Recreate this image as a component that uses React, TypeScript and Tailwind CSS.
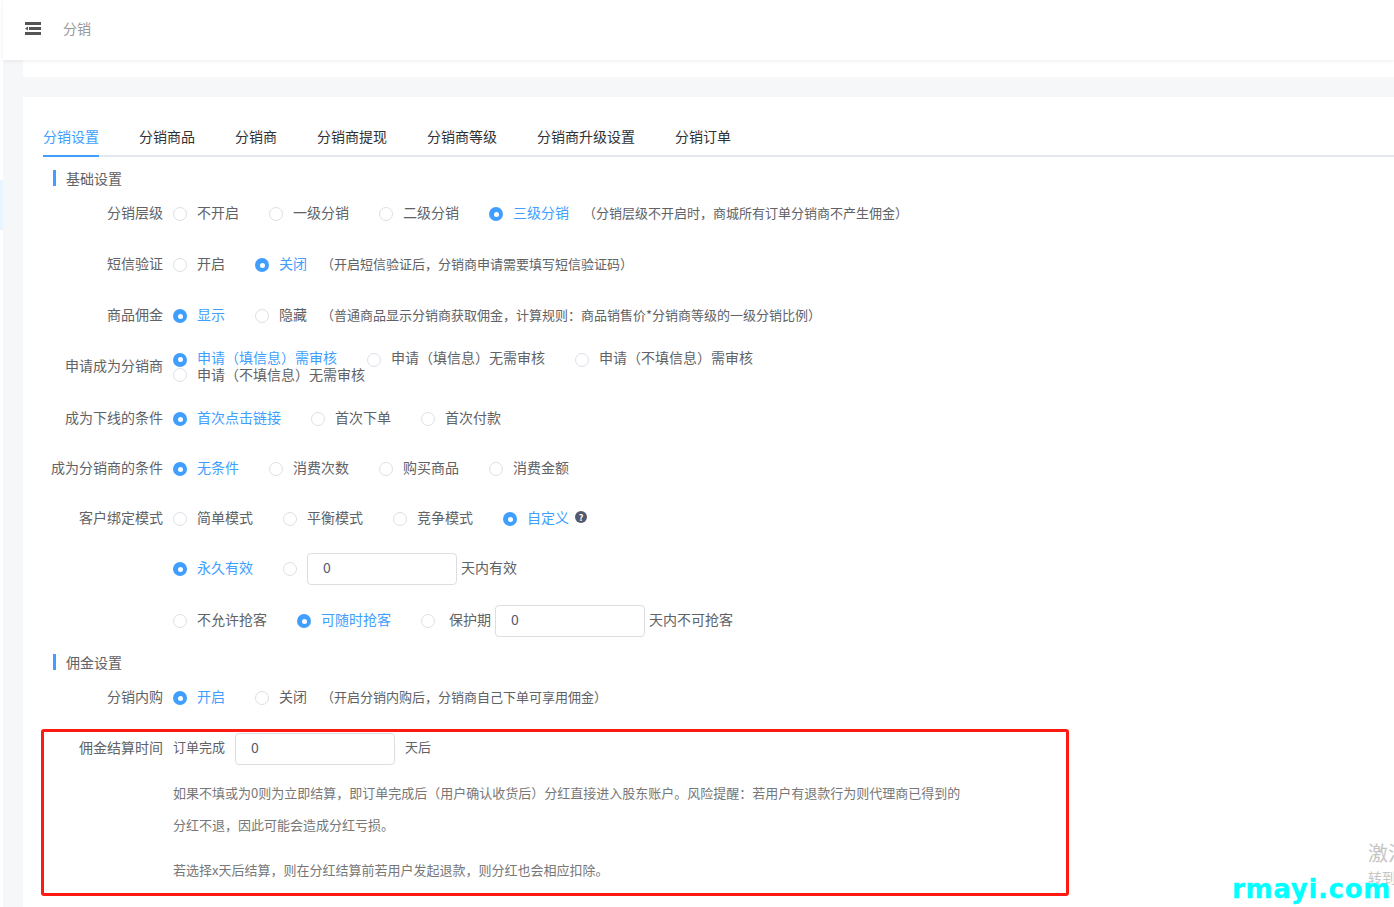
const font = "font-['Noto_Sans_CJK_SC','Noto_Sans',sans-serif]";

function Radio({ label, checked, className = '' }: { label?: string; checked?: boolean; className?: string }) {
    return (
        <span className={`flex items-center ${className}`}>
            {checked ? (
                <span className="mt-1 flex h-[14px] w-[14px] shrink-0 items-center justify-center rounded-full bg-[#409eff]">
                    <span className="h-[5px] w-[5px] rounded-full bg-white" />
                </span>
            ) : (
                <span className="mt-1 h-[14px] w-[14px] shrink-0 rounded-full border border-[#dcdfe6] bg-white" />
            )}
            {label && <span className={`ml-[10px] whitespace-nowrap ${checked ? 'text-[#409eff]' : ''}`}>{label}</span>}
        </span>
    );
}

function Row({ label, className = '', children }: { label?: string; className?: string; children: React.ReactNode }) {
    return (
        <div className={`flex h-8 items-center ${className}`}>
            <div className="w-[150px] shrink-0 whitespace-nowrap pr-[10px] text-right">{label}</div>
            {children}
        </div>
    );
}

function Hint({ children }: { children: React.ReactNode }) {
    return <span className="whitespace-nowrap text-[13px]">{children}</span>;
}

function SectionTitle({ title, className = '' }: { title: string; className?: string }) {
    return (
        <div className={`flex h-4 items-center ${className}`}>
            <span className="ml-[30px] h-4 w-[3px] bg-[#409eff]" />
            <span className="ml-[10px]">{title}</span>
        </div>
    );
}

function NumberBox({ w }: { w: string }) {
    return (
        <div className={`mt-1 flex h-8 items-center rounded border border-[#dcdee2] bg-white pb-[5px] pl-[15px] text-[#515a6e] ${w}`}>0</div>
    );
}

const tabs = ['分销设置', '分销商品', '分销商', '分销商提现', '分销商等级', '分销商升级设置', '分销订单'];

export default function App() {
    return (
        <div className={`relative flex h-[907px] overflow-hidden bg-white text-sm text-[#606266] ${font}`}>
            {/* sliver of the collapsed sidebar */}
            <div className="w-[3px] shrink-0 bg-white pt-[180px]">
                <div className="h-[50px] bg-[#e8f4ff]" />
            </div>

            <div className="flex min-w-0 flex-1 flex-col bg-[#f5f7f9]">
                <header className="z-10 flex h-[60px] shrink-0 items-center bg-white pb-1 pl-[22px] shadow-[0_1px_4px_rgba(0,21,41,0.08)]">
                    <svg width="16" height="13" viewBox="0 0 16 13" fill="#555">
                        <rect x="0" y="0" width="16" height="3" />
                        <rect x="4" y="5" width="12" height="3" />
                        <path d="M0 6.5 L3 4.4 V8.6 Z" />
                        <rect x="0" y="10" width="16" height="3" />
                    </svg>
                    <span className="ml-[22px] text-[#999]">分销</span>
                </header>

                <div className="pl-5">
                    <div className="h-[17px] bg-white" />
                    <div className="mt-5 h-[810px] bg-white">
                        <nav className="ml-5 flex h-[60px] items-end border-b-2 border-[#e4e7ed] pt-[28px]">
                            {tabs.map((t, i) => (
                                <span
                                    key={t}
                                    className={`-mb-[2px] mr-10 flex h-[32px] items-start whitespace-nowrap pt-px ${
                                        i === 0 ? 'border-b-2 border-[#409eff] text-[#409eff]' : 'text-[#303133]'
                                    }`}
                                >
                                    {t}
                                </span>
                            ))}
                        </nav>

                        <SectionTitle title="基础设置" className="mt-[13px]" />

                        <Row label="分销层级" className="mt-[10px]">
                            <Radio label="不开启" />
                            <Radio label="一级分销" className="ml-[30px]" />
                            <Radio label="二级分销" className="ml-[30px]" />
                            <Radio label="三级分销" checked className="ml-[30px]" />
                            <span className="ml-[14px]"><Hint>（分销层级不开启时，商城所有订单分销商不产生佣金）</Hint></span>
                        </Row>

                        <Row label="短信验证" className="mt-[19px]">
                            <Radio label="开启" />
                            <Radio label="关闭" checked className="ml-[30px]" />
                            <span className="ml-[14px]"><Hint>（开启短信验证后，分销商申请需要填写短信验证码）</Hint></span>
                        </Row>

                        <Row label="商品佣金" className="mt-[19px]">
                            <Radio label="显示" checked />
                            <Radio label="隐藏" className="ml-[30px]" />
                            <span className="ml-[14px]"><Hint>（普通商品显示分销商获取佣金，计算规则：商品销售价*分销商等级的一级分销比例）</Hint></span>
                        </Row>

                        <div className="mt-[19px] flex h-[34px] items-center">
                            <div className="w-[150px] shrink-0 whitespace-nowrap pb-[2px] pr-[10px] text-right">申请成为分销商</div>
                            <div className="leading-[17px]">
                                <div className="flex h-[17px] items-center">
                                    <Radio label="申请（填信息）需审核" checked />
                                    <Radio label="申请（填信息）无需审核" className="ml-[30px]" />
                                    <Radio label="申请（不填信息）需审核" className="ml-[30px]" />
                                </div>
                                <div className="flex h-[17px] items-center">
                                    <Radio label="申请（不填信息）无需审核" className="[&>span:first-child]:mt-0" />
                                </div>
                            </div>
                        </div>

                        <Row label="成为下线的条件" className="mt-[18px]">
                            <Radio label="首次点击链接" checked />
                            <Radio label="首次下单" className="ml-[30px]" />
                            <Radio label="首次付款" className="ml-[30px]" />
                        </Row>

                        <Row label="成为分销商的条件" className="mt-[18px]">
                            <Radio label="无条件" checked />
                            <Radio label="消费次数" className="ml-[30px]" />
                            <Radio label="购买商品" className="ml-[30px]" />
                            <Radio label="消费金额" className="ml-[30px]" />
                        </Row>

                        <Row label="客户绑定模式" className="mt-[18px]">
                            <Radio label="简单模式" />
                            <Radio label="平衡模式" className="ml-[30px]" />
                            <Radio label="竞争模式" className="ml-[30px]" />
                            <Radio label="自定义" checked className="ml-[30px]" />
                            <span className="ml-[6px] flex h-3 w-3 items-center justify-center rounded-full bg-[#515a6e] text-[9px] font-bold leading-none text-white">?</span>
                        </Row>

                        <Row className="mt-[18px]">
                            <Radio label="永久有效" checked />
                            <Radio className="ml-[30px]" />
                            <div className="ml-[10px]"><NumberBox w="w-[150px]" /></div>
                            <span className="ml-[4px]">天内有效</span>
                        </Row>

                        <Row className="mt-5">
                            <Radio label="不允许抢客" />
                            <Radio label="可随时抢客" checked className="ml-[30px]" />
                            <Radio className="ml-[30px]" />
                            <span className="ml-[14px]">保护期</span>
                            <div className="ml-[4px]"><NumberBox w="w-[150px]" /></div>
                            <span className="ml-[4px]">天内不可抢客</span>
                        </Row>

                        <SectionTitle title="佣金设置" className="mt-[19px]" />

                        <Row label="分销内购" className="mt-[10px]">
                            <Radio label="开启" checked />
                            <Radio label="关闭" className="ml-[30px]" />
                            <span className="ml-[14px]"><Hint>（开启分销内购后，分销商自己下单可享用佣金）</Hint></span>
                        </Row>

                        <Row label="佣金结算时间" className="mt-[19px]">
                            <span className="text-[13px]">订单完成</span>
                            <div className="ml-[10px]"><NumberBox w="w-[160px]" /></div>
                            <span className="ml-[10px] text-[13px]">天后</span>
                        </Row>

                        <div className="ml-[150px] text-[13px] text-[#777]">
                            <p className="mt-5 leading-5">如果不填或为0则为立即结算，即订单完成后（用户确认收货后）分红直接进入股东账户。风险提醒：若用户有退款行为则代理商已得到的</p>
                            <p className="mt-3 leading-5">分红不退，因此可能会造成分红亏损。</p>
                            <p className="mt-[25px] leading-5">若选择x天后结算，则在分红结算前若用户发起退款，则分红也会相应扣除。</p>
                        </div>
                    </div>
                </div>
            </div>

            {/* annotation drawn over the screenshot */}
            <div className="pointer-events-none absolute left-[41px] top-[729px] h-[167px] w-[1028px] rounded-[3px] border-[3px] border-[#ff1a12]" />

            {/* windows activation + site watermark */}
            <div className="pointer-events-none absolute left-[1368px] top-[840px] whitespace-nowrap text-[20px] leading-[26px] text-[#c4c4c4]">激活</div>
            <div className="pointer-events-none absolute left-[1368px] top-[867px] whitespace-nowrap leading-5 text-[#c4c4c4]">转到</div>
            <div className="pointer-events-none absolute left-[1232px] top-[871px] whitespace-nowrap font-['DejaVu_Sans',sans-serif] text-[26px] font-black leading-9 tracking-[0.7px] text-[#00ffff] [-webkit-text-stroke:0.3px_#00ffff]">rmayi.com</div>
        </div>
    );
}
